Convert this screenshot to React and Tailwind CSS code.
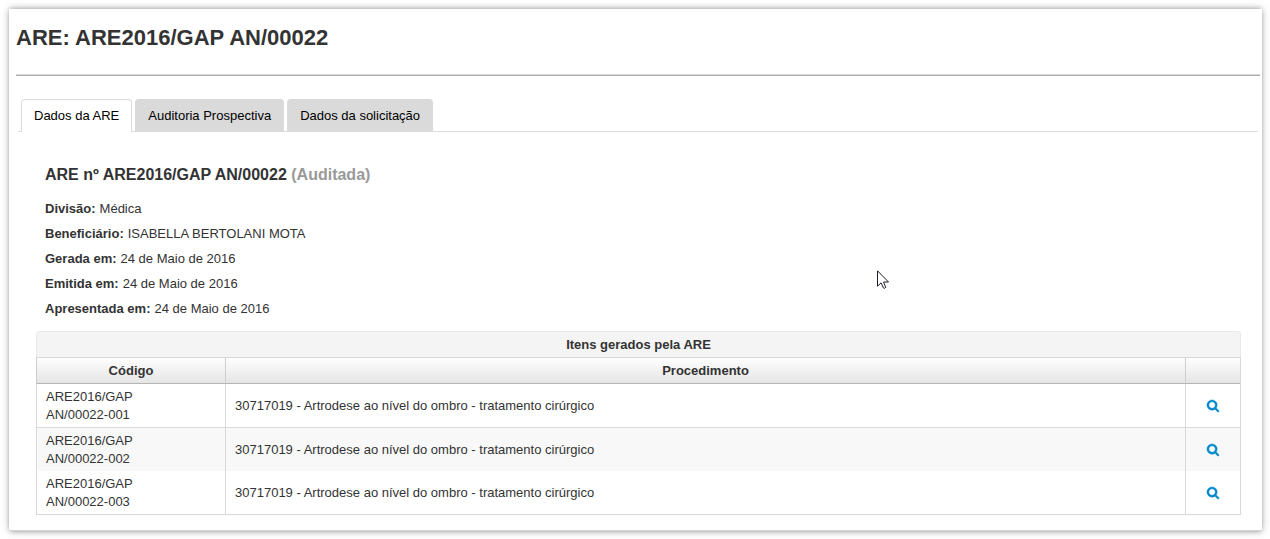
const tabs = ["Dados da ARE", "Auditoria Prospectiva", "Dados da solicitação"];

const details = [
  ["Divisão:", "Médica"],
  ["Beneficiário:", "ISABELLA BERTOLANI MOTA"],
  ["Gerada em:", "24 de Maio de 2016"],
  ["Emitida em:", "24 de Maio de 2016"],
  ["Apresentada em:", "24 de Maio de 2016"],
];

const items = ["001", "002", "003"].map((n) => ({
  code: `ARE2016/GAP AN/00022-${n}`,
  procedure: "30717019 - Artrodese ao nível do ombro - tratamento cirúrgico",
}));

function SearchIcon() {
  return (
    <svg viewBox="64 128 1664 1664" className="block size-3 overflow-visible" fill="currentColor" stroke="currentColor" strokeWidth="70" aria-hidden="true">
      <path d="M1216 832q0-185-131.5-316.5t-316.5-131.5-316.5 131.5-131.5 316.5 131.5 316.5 316.5 131.5 316.5-131.5 131.5-316.5zm512 832q0 52-38 90t-90 38q-54 0-90-38l-343-342q-179 124-399 124-143 0-273.5-55.5t-225-150-150-225-55.5-273.5 55.5-273.5 150-225 225-150 273.5-55.5 273.5 55.5 225 150 150 225 55.5 273.5q0 220-124 399l343 343q37 37 37 90z" />
    </svg>
  );
}

function Tabs() {
  return (
    <div role="tablist" className="mr-1 ml-[9px] flex gap-[3px] border-b border-[#dcdcdc] pl-[3px]">
      {tabs.map((tab, i) => (
        <button
          key={tab}
          type="button"
          role="tab"
          aria-selected={i === 0}
          className={
            i === 0
              ? "-mb-px h-[33px] rounded-t-[4px] border border-b-0 border-[#dcdcdc] bg-white px-3 pb-px text-black"
              : "h-8 rounded-t-[4px] border border-b-0 border-[#dadada] bg-[#dadada] px-3 text-black"
          }
        >
          {tab}
        </button>
      ))}
    </div>
  );
}

function ItemsTable() {
  return (
    <div className="mt-[10px] overflow-hidden rounded-t-[3px]">
      <table className="w-full table-fixed border-separate border-spacing-0 border-r border-b border-[#d9d9d9]">
        <caption className="h-[26px] rounded-t-[3px] border border-b-0 border-[#e8e8e8] bg-[#f4f4f4] text-[13px] leading-[25px] font-bold">
          Itens gerados pela ARE
        </caption>
        <colgroup>
          <col className="w-[189px]" />
          <col />
          <col className="w-[55px]" />
        </colgroup>
        <thead>
          <tr className="h-[27px] bg-linear-to-b from-white to-[#e4e4e4]">
            <th scope="col" className="border-t border-b border-l border-t-[#d9d9d9] border-b-[#b5b5b5] border-l-[#cfcfcf] p-0">Código</th>
            <th scope="col" className="border-t border-b border-l border-t-[#d9d9d9] border-b-[#b5b5b5] border-l-[#cfcfcf] p-0">Procedimento</th>
            <th scope="col" aria-label="Ações" className="border-t border-b border-l border-t-[#d9d9d9] border-b-[#b5b5b5] border-l-[#cfcfcf] p-0"></th>
          </tr>
        </thead>
        <tbody>
          {items.map((item, i) => {
            const cell =
              i === 0
                ? "border-b border-l border-[#d9d9d9] px-[9px] pt-1 pb-[3px]"
                : "border-l border-[#d9d9d9] px-[9px] pt-1 pb-[3px]";
            return (
              <tr key={item.code} className={i === 1 ? "bg-[#f8f8f8]" : "bg-white"}>
                <td className={cell}>
                  <span className="block w-[110px] leading-[18px]">{item.code}</span>
                </td>
                <td className={cell}>{item.procedure}</td>
                <td className={cell}>
                  <a href="#detalhes" aria-label={`Ver ${item.code}`} className="flex justify-center text-[#0088cc]">
                    <SearchIcon />
                  </a>
                </td>
              </tr>
            );
          })}
        </tbody>
      </table>
    </div>
  );
}

export default function App() {
  return (
    <div className="bg-white pt-[9px] pr-2 pb-2 pl-[9px] font-['Liberation_Sans',Arial,sans-serif] text-[13px] leading-[18px] text-[#333]">
      <main className="border-b border-[#d4d4d4] bg-white pb-[15px] shadow-[0_0_8px_rgba(0,0,0,0.25),0_-2px_4px_-1px_rgba(0,0,0,0.18),0_2px_4px_-1px_rgba(0,0,0,0.18)]">
        <h1 className="px-[7px] pt-[17px] text-[22px] leading-6 font-bold">ARE: ARE2016/GAP AN/00022</h1>
        <hr className="mt-6 mr-[2px] mb-[23px] ml-[7px] h-[2px] border-t border-b border-t-[#d6d6d6] border-b-[#b0b0b0]" />
        <Tabs />
        <section className="mr-[21px] ml-[27px] pt-[33px]">
          <h2 className="px-[9px] text-[16px] leading-5 font-bold">
            ARE nº ARE2016/GAP AN/00022 <span className="text-[#999]">(Auditada)</span>
          </h2>
          <dl className="mt-[11px] px-[9px]">
            {details.map(([label, value]) => (
              <div key={label} className="flex gap-1 leading-[25px]">
                <dt className="font-bold">{label}</dt>
                <dd>{value}</dd>
              </div>
            ))}
          </dl>
          <ItemsTable />
        </section>
      </main>
      <svg viewBox="0 0 12 19" className="pointer-events-none absolute top-[270px] left-[877px] h-[19px] w-3" aria-hidden="true">
        <path d="M.5 .8V16.2L4.1 12.8L6.3 17.8Q7.3 19 8.7 17.4L6.6 12H11.5Z" fill="#fff" stroke="#1c1c28" strokeWidth="1" />
      </svg>
    </div>
  );
}
